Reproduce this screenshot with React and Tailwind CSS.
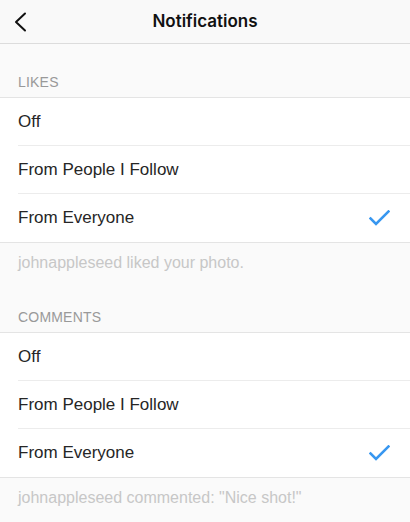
import React from "react";

const font = { fontFamily: '"Liberation Sans", Arial, sans-serif' };

function Check() {
  return (
    <svg width="21" height="16" viewBox="0 0 21 16" fill="none">
      <path d="M1.5 8.5 L7 14 L19.5 1.5" stroke="#3897f0" strokeWidth="2.6" strokeLinecap="square" strokeLinejoin="miter" />
    </svg>
  );
}

function Row({ label, checked, last }) {
  return (
    <div className={"flex items-center h-[48px] pr-[20px] " + (last ? "" : "border-b border-[#ececec]")}>
      <span className="flex-1 text-[17px] leading-[20px] text-[#262626]">{label}</span>
      {checked && <Check />}
    </div>
  );
}

function Section({ title, footer, first }) {
  return (
    <div>
      <div className={"flex items-end px-[18px] pb-[7px] " + (first ? "h-[53px]" : "h-[59px]")}>
        <span className="text-[14px] leading-[16px] text-[#999999] tracking-[0.2px]">{title}</span>
      </div>
      <div className="bg-white border-y border-[#e4e4e4] pl-[18px]">
        <Row label="Off" />
        <Row label="From People I Follow" />
        <Row label="From Everyone" checked last />
      </div>
      <div className="px-[18px] pt-[10px] text-[16px] leading-[20px] text-[#c7c7c7]">
        {footer}
      </div>
    </div>
  );
}

export default function App() {
  return (
    <div className="w-[410px] h-[522px] bg-[#fafafa] overflow-hidden" style={font}>
      <div className="relative h-[44px] flex items-center justify-center border-b border-[#dcdcdc] bg-[#f9f9f9]">
        <div className="absolute left-[13px] top-[12px]">
          <svg width="14" height="20" viewBox="0 0 14 20" fill="none">
            <path d="M12 1.5 L3 10 L12 18.5" stroke="#111" strokeWidth="2" strokeLinecap="round" strokeLinejoin="round" />
          </svg>
        </div>
        <span className="text-[17px] font-semibold text-[#111] leading-[20px] mt-[-2px]" style={{ fontFamily: 'Inter, "Liberation Sans", sans-serif' }}>Notifications</span>
      </div>
      <Section first title="LIKES" footer="johnappleseed liked your photo." />
      <Section title="COMMENTS" footer={'johnappleseed commented: "Nice shot!"'} />
    </div>
  );
}
